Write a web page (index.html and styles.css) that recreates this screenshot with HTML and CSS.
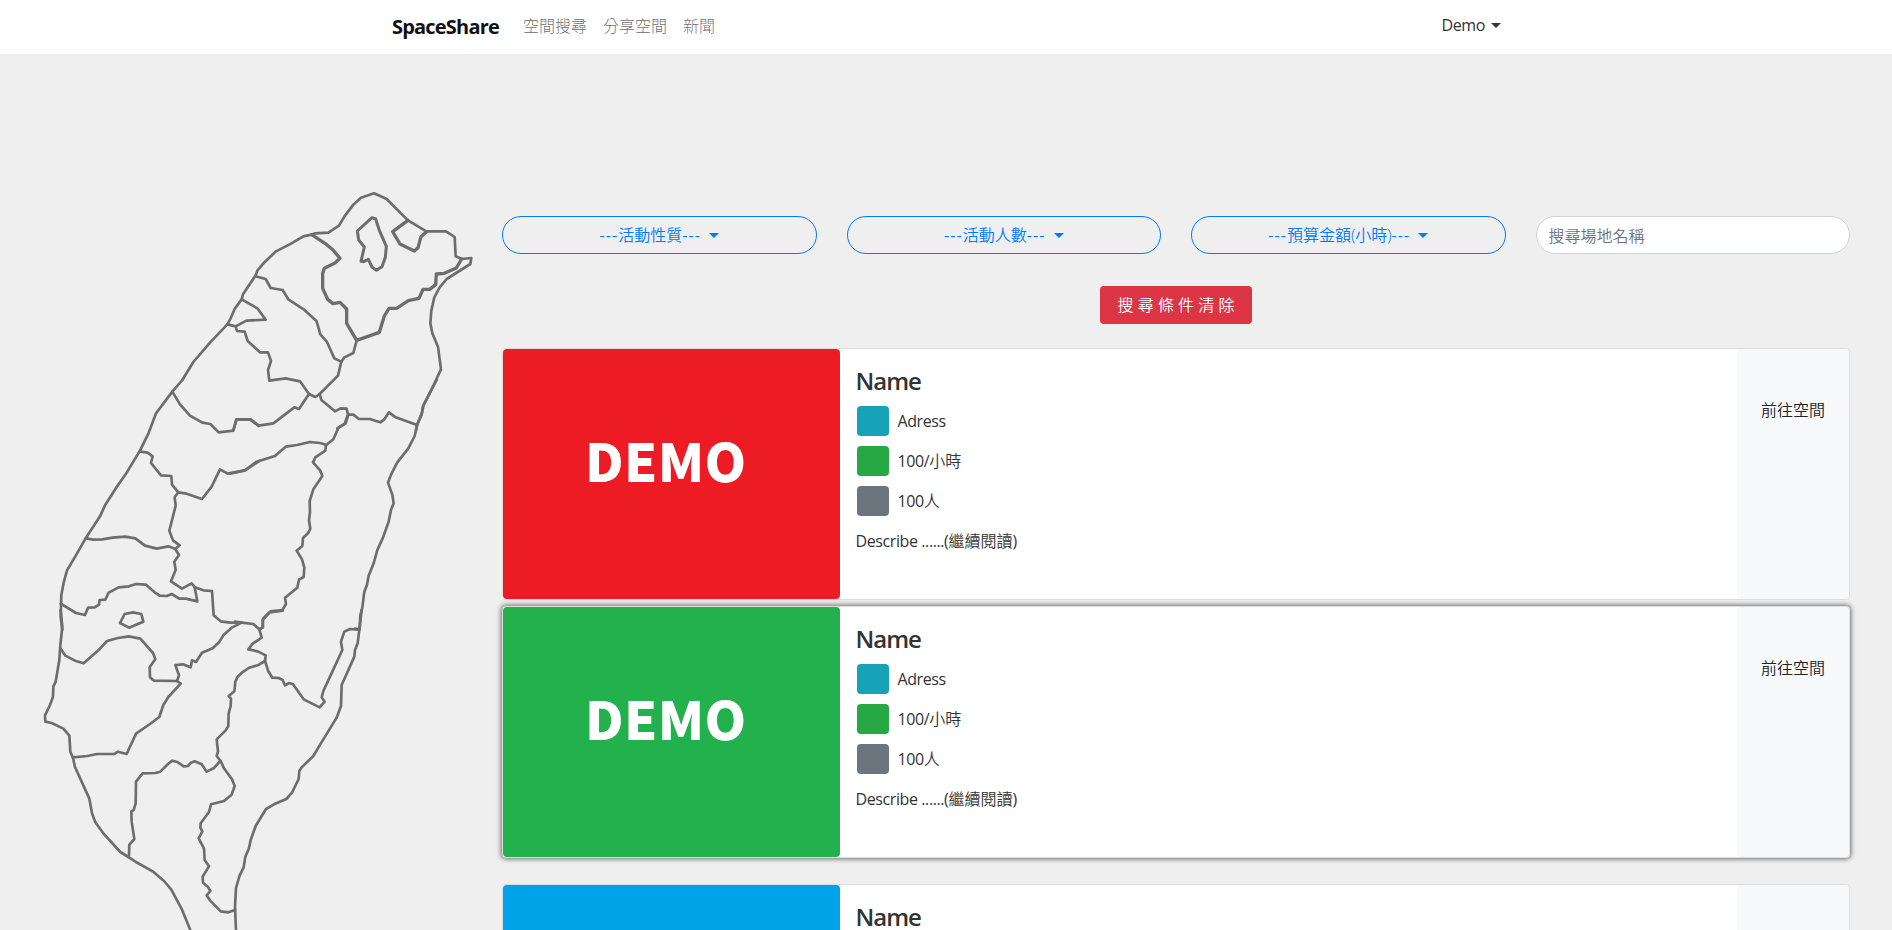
FILE: index.html
```html
<!DOCTYPE html>
<html lang="zh-Hant">
<head>
<meta charset="utf-8">
<title>SpaceShare</title>
<link rel="stylesheet" href="styles.css">
</head>
<body>
<nav class="navbar">
  <div class="nav-inner">
    <a class="brand">SpaceShare</a>
    <a class="nav-link">空間搜尋</a>
    <a class="nav-link">分享空間</a>
    <a class="nav-link">新聞</a>
    <a class="user"><span class="latin">Demo</span><span class="caret"></span></a>
  </div>
</nav>
<main class="page">
  <aside class="map">
    <svg class="map-svg" viewBox="0 54 502 876">
      <!-- north -->
      <g transform="translate(210 180) scale(.33333)">
        <path d="M-83 600L-50 546L0 488L52 433L62 415L75 385L95 358L99 343L137 286L142 272L162 248L198 214L243 191L280 169L305 164L315 160L355 158L387 137L403 110L430 74L453 53L492 40L530 57L594 121L649 154L708 154L734 171L737 229L755 237L784 234L781 252L710 297L689 322L673 352L664 392L661 430L667 460L684 500L693 568L671 615L639 679L635 704L621 735L618 750"/>
        <path d="M137 289L167 297L182 324L218 330L235 358L281 388L320 424L331 463L351 486L373 535L394 545"/>
        <path d="M95 358L142 385L167 419L109 422L77 439L52 433M77 439L81 453L104 455L113 483L150 517L174 517L183 543L174 570L178 602L227 595L270 604L297 642L316 651L329 642L384 587L394 545L403 532L430 519L440 481"/>
        <path d="M297 642L267 687L253 682L190 730L146 737L122 718L79 718L70 750M329 642L334 660L375 694L392 685L410 686L414 704L430 704L447 717L479 717L511 727L523 718L537 697L557 712L621 735M414 704L404 731L382 745"/>
        <g class="thick">
          <path d="M305 164L345 190L370 211L390 235L375 249L343 265L338 280L338 325L353 358L369 371L390 367L410 387L410 430L440 481L508 457L523 408L537 385L560 385L595 362L627 355L639 328L659 328L677 314L679 282L703 280L739 264L755 237"/>
          <path d="M594 121L548 155L570 192L613 213L624 203L633 170L649 156"/>
          <path class="mid" d="M486 113L442 153L446 180L463 201L453 244L461 245L475 238L486 261L499 271L516 260L526 232L529 199L508 151L497 117Z"/>
        </g>
      </g>
      <!-- west -->
      <g transform="translate(30 380) scale(.33333)">
        <path d="M457 0L427 35L378 100L355 161L330 212L290 278L262 318L226 374L210 409L168 473L136 529L111 571L101 608L94 645L92 710L97 750"/>
        <path d="M427 35L450 73L480 107L517 128L541 132L566 157L610 152L620 118L660 118L686 138M330 215L353 218L368 229L363 249L393 286L424 288L426 314L445 337L470 341L516 357L545 320L570 268L593 281L645 271L690 242"/>
        <path d="M445 337L434 352L437 377L418 452L429 481L449 496L436 507L447 525L433 545L437 570L423 604L456 626L485 610L495 622L520 631L546 633L551 706L572 724L600 728L635 728"/>
        <path d="M168 475L190 479L217 478L248 473L285 470L316 475L345 497L380 506L415 499L436 507M92 671L138 699L165 705L174 683L194 682L207 674L209 660L226 659L236 638L266 622L297 619L318 612L348 614L374 637L389 647L411 648L425 642L448 656L468 656L502 664L494 622"/>
        <path d="M284 702L270 729L297 743L340 725L334 702L309 697Z"/>
      </g>
      <!-- east -->
      <g transform="translate(230 380) scale(.33333)">
        <path d="M620 0L580 77L576 98L562 133L554 168L535 205L502 247L483 284L474 308L487 344L491 370L483 390L476 425L459 473L442 510L431 550L416 587L411 614L403 635L397 683L391 706L389 748L375 746"/>
        <path d="M355 103L347 130L325 144L310 178L288 196L286 212L256 232L249 247L271 272L277 288L250 328L239 363L240 396L237 421L241 446L234 460L219 474L217 498L200 512L216 538L223 562L221 591L207 599L202 623L165 653L168 672L157 690L121 694L99 716L98 742L90 747M288 194L270 189L240 186L201 195L167 200L135 228L80 245L45 271L0 281"/>
      </g>
      <!-- south-west -->
      <g transform="translate(30 610) scale(.33333)">
        <path d="M92 0L97 50L91 105L88 150L77 215L70 230L69 260L60 285L45 316L46 335L65 339L100 356L118 377L121 425L129 444L135 471L178 566L186 610L196 637L220 670L271 726L295 741L318 756L368 784L402 813L424 839L456 899L481 960"/>
        <path d="M91 115L106 137L135 152L161 160L205 121L231 93L264 84L296 79L331 86L369 129L376 147L359 172L360 202L372 212L441 213L452 221L415 261L400 285L388 321L360 342L318 371L290 432L264 425L253 432L201 432L172 438L129 442"/>
        <path d="M441 213L447 196L436 165L459 163L482 172L486 151L498 156L516 128L548 115L567 97L580 76L605 53L635 38"/>
        <path d="M571 453L552 474L530 485L515 463L494 454L483 458L474 468L461 469L442 456L427 452L414 462L391 485L376 489L338 490L318 515L317 580L311 600L304 604L305 635L313 687L298 704L297 736"/>
      </g>
      <!-- south-east -->
      <g transform="translate(190 610) scale(.33333)">
        <path d="M515 0L503 100L495 120L493 140L455 225L453 288L440 323L394 398L370 438L335 472L328 483L326 507L306 548L289 567L252 583L228 597L197 648L182 690L177 715L166 740L161 772L149 796L138 834L135 890L138 960"/>
        <path d="M135 35L155 38L190 42L208 58L215 83L188 101L175 118L203 124L227 136L225 153L207 164L176 174L157 187L143 200L136 215L133 244L116 258L123 266L122 288L116 310L115 348L107 361L80 388L84 424L80 438L92 453L102 475L126 508L134 528L125 554L102 573L63 583L57 606L32 640L31 653L37 664L26 685L42 716L44 750L57 769L38 800L39 818L54 831L61 843L50 856L60 871L92 904L115 907L135 900"/>
        <path d="M225 153L235 184L247 203L266 204L278 210L285 226L297 219L309 223L341 268L389 292L404 275L395 262L400 243L427 185L457 120L453 95L463 65L480 57L506 59M208 58L219 52L218 30L239 7L278 2"/>
      </g>
    </svg>
  </aside>
  <section class="content">
    <div class="filters">
      <button class="pill"><span class="dash">---</span>活動性質<span class="dash">---</span><span class="caret"></span></button>
      <button class="pill"><span class="dash">---</span>活動人數<span class="dash">---</span><span class="caret"></span></button>
      <button class="pill"><span class="dash">---</span>預算金額(小時)<span class="dash">---</span><span class="caret"></span></button>
      <input class="search" type="text" placeholder="搜尋場地名稱">
    </div>
    <button class="clear">搜 尋 條 件 清 除</button>
    <article class="card">
      <div class="thumb red"><span class="demo">DEMO</span></div>
      <div class="card-body">
        <h5 class="title">Name</h5>
        <p class="row"><i class="badge info"></i><span class="latin">Adress</span></p>
        <p class="row"><i class="badge success"></i><span class="latin">100/</span>小時</p>
        <p class="row"><i class="badge secondary"></i><span class="latin">100</span>人</p>
        <p class="desc"><span class="latin">Describe ......(</span>繼續閱讀<span class="latin">)</span></p>
      </div>
      <a class="go">前往空間</a>
    </article>
    <article class="card raised">
      <div class="thumb green"><span class="demo">DEMO</span></div>
      <div class="card-body">
        <h5 class="title">Name</h5>
        <p class="row"><i class="badge info"></i><span class="latin">Adress</span></p>
        <p class="row"><i class="badge success"></i><span class="latin">100/</span>小時</p>
        <p class="row"><i class="badge secondary"></i><span class="latin">100</span>人</p>
        <p class="desc"><span class="latin">Describe ......(</span>繼續閱讀<span class="latin">)</span></p>
      </div>
      <a class="go">前往空間</a>
    </article>
    <article class="card">
      <div class="thumb blue"></div>
      <div class="card-body">
        <h5 class="title">Name</h5>
      </div>
      <div class="go"></div>
    </article>
  </section>
</main>
</body>
</html>
```
FILE: styles.css
```css
* { box-sizing: border-box; }
body {
  margin: 0;
  height: 930px;
  overflow: hidden;
  background: #efefef;
  color: #212529;
  font: 350 16px/24px "Open Sans", "Noto Sans CJK TC", sans-serif;
}
.navbar { height: 54px; background: #fff; }
.nav-inner {
  display: flex;
  align-items: center;
  width: 1110px;
  height: 52px;
  margin: 0 auto;
}
.brand {
  width: 107px;
  margin-left: 1px;
  margin-right: 24px;
  padding-top: 1px;
  font-size: 20px;
  font-weight: 700;
  letter-spacing: -.8px;
  color: #111;
  white-space: nowrap;
}
.nav-link { margin-right: 16px; font-weight: 300; color: rgba(0, 0, 0, .6); }
.user {
  display: flex;
  align-items: center;
  margin-left: auto;
  padding-bottom: 2px;
  color: #333;
}
.latin { font-weight: 400; letter-spacing: -.4px; white-space: pre; }
.caret {
  display: inline-block;
  margin-left: 6px;
  border: 5px solid transparent;
  border-top-color: currentColor;
  border-bottom: 0;
}
.page { display: flex; height: 876px; overflow: hidden; }
.map { flex: none; width: 502px; }
.map-svg {
  display: block;
  width: 502px;
  height: 876px;
  fill: none;
  stroke: #6d6d6d;
  stroke-width: 8;
  stroke-linejoin: round;
  stroke-linecap: round;
}
.thick { stroke-width: 10; }
.mid { stroke-width: 9; }
.content {
  display: flex;
  flex-direction: column;
  width: 1348px;
  padding-top: 162px;
}
.filters {
  display: grid;
  grid-template-columns: repeat(4, 1fr);
  gap: 30px;
  margin-bottom: 32px;
}
.pill, .search {
  height: 38px;
  min-width: 0;
  border-radius: 20px;
  font: inherit;
}
.pill {
  display: flex;
  align-items: center;
  justify-content: center;
  border: 1px solid #007bff;
  background: transparent;
  color: #007bff;
}
.dash { font-weight: 400; letter-spacing: 1.1px; }
.pill .caret { margin-left: 8px; }
.search {
  padding: 7px 12px 5px;
  border: 1px solid #ced4da;
  background: #fff;
}
.search::placeholder { color: #6c757d; opacity: 1; }
.clear {
  flex: none;
  align-self: center;
  width: 152px;
  height: 38px;
  margin-bottom: 24px;
  padding: 0;
  border: 0;
  border-radius: 4px;
  background: #dc3545;
  color: #fff;
  font: inherit;
}
.card {
  display: grid;
  grid-template-columns: 3fr 8fr 1fr;
  flex: none;
  height: 252px;
  margin-bottom: 16px;
  border: 1px solid #dcdcdc;
  border-radius: 4px;
  background: #fff;
}
.raised {
  transform: translateY(-10px);
  box-shadow: 0 0 5px 1px rgba(0, 0, 0, .55);
}
.thumb {
  display: flex;
  justify-content: center;
  border-radius: 4px;
}
.red { background: #ed1c24; }
.green { background: #22b14c; }
.blue { background: #00a2e8; }
.demo {
  padding-top: 82px;
  margin-right: 11px;
  color: #fff;
  font: 900 53px/56px "Noto Sans CJK TC", sans-serif;
  letter-spacing: .3px;
}
.card-body { padding: 19px 16px 0; color: #333; }
.title {
  margin: 0 0 12px;
  font-size: 24px;
  line-height: 26px;
  font-weight: 600;
  letter-spacing: -1px;
}
.row {
  display: flex;
  align-items: center;
  height: 30px;
  margin: 0 0 10px;
}
.badge {
  width: 32px;
  height: 30px;
  margin: 0 9px 0 1px;
  border-radius: 4px;
}
.info { background: #17a2b8; }
.success { background: #28a745; }
.secondary { background: #6c757d; }
.desc { margin: 13px 0 0; }
.go {
  padding-top: 49px;
  border-radius: 4px;
  background: #f8f9fa;
  text-align: center;
}
```
